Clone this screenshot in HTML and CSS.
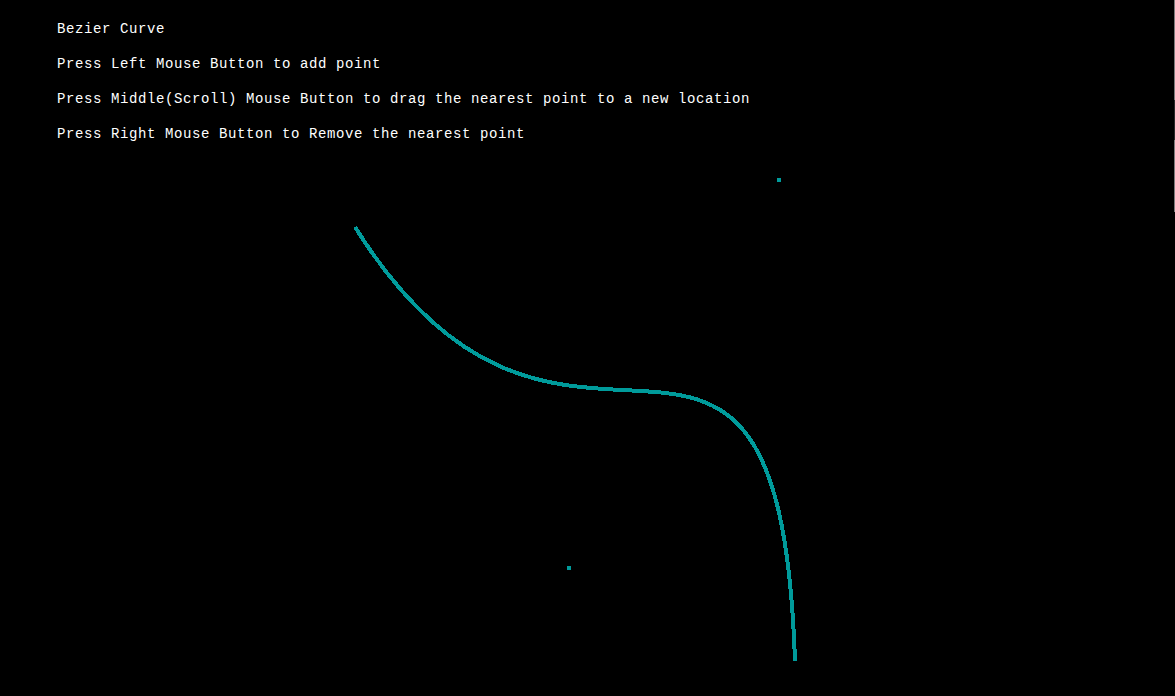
FILE: index.html
```html
<!DOCTYPE html>
<html>
<head>
<meta charset="utf-8">
<title>Bezier Curve</title>
<link rel="stylesheet" href="styles.css">
</head>
<body>
<main class="stage">
  <div class="help">
    <p class="line">Bezier Curve</p>
    <p class="line">Press Left Mouse Button to add point</p>
    <p class="line">Press Middle(Scroll) Mouse Button to drag the nearest point to a new location</p>
    <p class="line">Press Right Mouse Button to Remove the nearest point</p>
  </div>
  <svg class="canvas" width="1175" height="696" viewBox="0 0 1175 696">
    <path class="curve" d="M355 227 C568 568 779 180 795 661"/>
    <rect class="ctrl" x="777" y="178" width="4" height="4"/>
    <rect class="ctrl" x="567" y="566" width="4" height="4"/>
    <rect class="edge" x="1174" y="0" width="1" height="100"/>
    <rect class="edge dim" x="1174" y="100" width="1" height="40"/>
    <rect class="edge" x="1174" y="140" width="1" height="72"/>
  </svg>
</main>
</body>
</html>
```
FILE: styles.css
```css
html, body {
  margin: 0;
  padding: 0;
  background: #000;
}
.stage {
  position: relative;
  width: 1175px;
  height: 696px;
  overflow: hidden;
  background: #000;
}
.help {
  padding: 12px 0 0 57px;
}
.line {
  margin: 0;
  font-family: "Liberation Mono", "DejaVu Sans Mono", monospace;
  font-size: 14px;
  letter-spacing: 0.6px;
  line-height: 35px;
  color: #fff;
  white-space: pre;
  -webkit-font-smoothing: none;
}
.canvas {
  position: absolute;
  left: 0;
  top: 0;
}
.curve {
  fill: none;
  stroke: #009b9b;
  stroke-width: 4;
  shape-rendering: crispEdges;
}
.ctrl {
  fill: #009b9b;
}
.edge {
  fill: #7a7a7a;
}
.edge.dim {
  fill: #2a2a2a;
}
```
